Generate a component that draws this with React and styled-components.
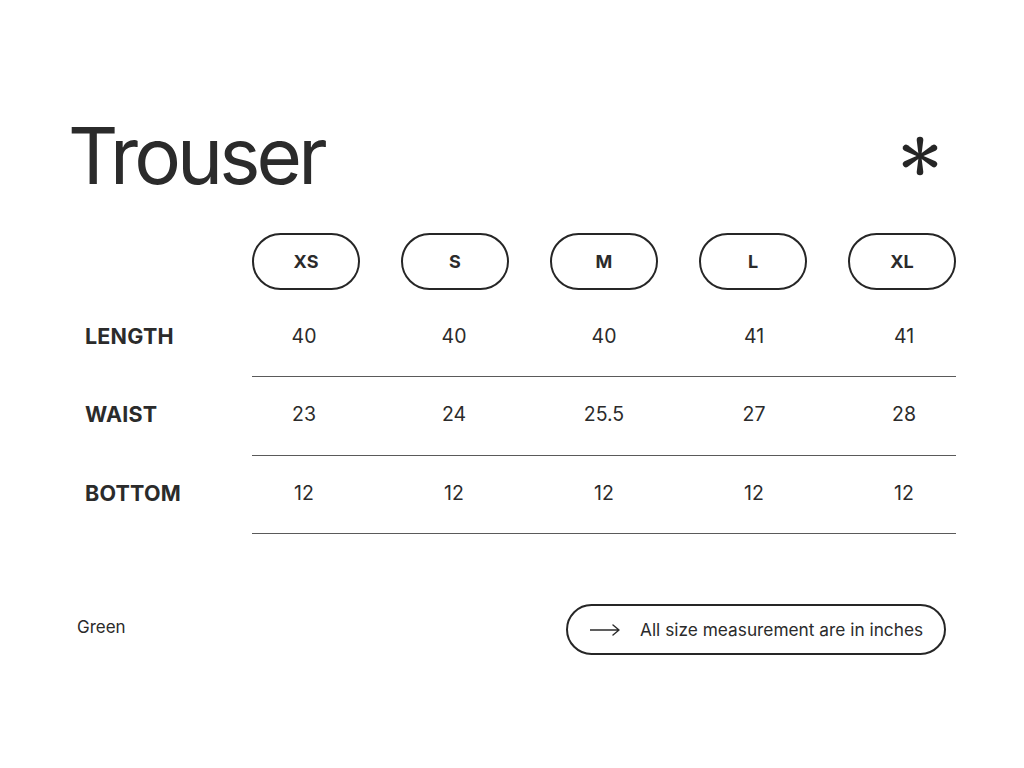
import React from "react";
import styled, { createGlobalStyle } from "styled-components";

const GlobalStyle = createGlobalStyle`
  html, body {
    margin: 0;
    padding: 0;
    background: #ffffff;
  }
  body {
    font-family: Inter, "Noto Sans", "Liberation Sans", sans-serif;
    color: #2b2b2b;
  }
`;

const Page = styled.div`
  width: 1024px;
  height: 768px;
  box-sizing: border-box;
  padding: 117px 68px 0 70px;
  background: #fff;
`;

const Header = styled.div`
  display: flex;
  justify-content: space-between;
  align-items: center;
  padding-right: 14px;
`;

const Title = styled.h1`
  margin: 0 0 0 -2px;
  font-size: 78px;
  line-height: 78px;
  font-weight: 400;
  letter-spacing: -3.9px;
  color: #2b2b2b;
`;

const Table = styled.div`
  margin-top: 38px;
  display: flex;
  flex-direction: column;
`;

const Row = styled.div`
  display: flex;
  align-items: stretch;
  margin-top: ${(p) => (p.first ? "8.5px" : "0")};
`;

const Label = styled.div`
  width: 182px;
  box-sizing: border-box;
  padding-left: 15px;
  padding-bottom: 4px;
  display: flex;
  align-items: center;
  font-size: 21.5px;
  font-weight: 700;
  letter-spacing: 0.2px;
  color: #2b2b2b;
`;

const Cells = styled.div`
  flex: 1;
  display: flex;
  justify-content: space-between;
  align-items: center;
  height: ${(p) => (p.head ? "57px" : "74.5px")};
  padding-bottom: ${(p) => (p.head ? "0" : "3px")};
  border-bottom: ${(p) => (p.head ? "none" : "1px solid #5a5a5a")};
`;

const Pill = styled.div`
  width: 108px;
  height: 57px;
  box-sizing: border-box;
  border: 2px solid #262626;
  border-radius: 29px;
  display: flex;
  align-items: center;
  justify-content: center;
  font-size: 18px;
  font-weight: 700;
  color: #2b2b2b;
`;

const Value = styled.div`
  width: 104px;
  text-align: center;
  font-size: 19.5px;
  color: #2b2b2b;
`;

const Footer = styled.div`
  margin-top: 70px;
  display: flex;
  justify-content: space-between;
  align-items: center;
  padding: 0 10px 0 7px;
`;

const Color = styled.div`
  font-size: 17px;
  color: #2b2b2b;
  margin-top: -5px;
`;

const Note = styled.div`
  width: 380px;
  height: 51px;
  box-sizing: border-box;
  border: 2px solid #262626;
  border-radius: 26px;
  display: flex;
  align-items: center;
  padding-left: 22px;
  gap: 20px;
  font-size: 17.3px;
  color: #2b2b2b;
`;

const Asterisk = () => (
  <svg width="44" height="44" viewBox="-22 -22 44 44">
    {[0, 60, 120, 180, 240, 300].map((a) => (
      <path
        key={a}
        transform={`rotate(${a})`}
        d="M -1.3 0 L -3.3 -16 A 3.3 3.3 0 0 1 3.3 -16 L 1.3 0 Z"
        fill="#262626"
      />
    ))}
    <circle r="2.6" fill="#262626" />
  </svg>
);

const Arrow = () => (
  <svg width="30" height="14" viewBox="0 0 30 14">
    <path
      d="M0 7 H29 M23 2 L29 7 L23 12"
      fill="none"
      stroke="#2b2b2b"
      strokeWidth="1.4"
      strokeLinecap="round"
      strokeLinejoin="round"
    />
  </svg>
);

const sizes = ["XS", "S", "M", "L", "XL"];

const rows = [
  { name: "LENGTH", values: ["40", "40", "40", "41", "41"] },
  { name: "WAIST", values: ["23", "24", "25.5", "27", "28"] },
  { name: "BOTTOM", values: ["12", "12", "12", "12", "12"] },
];

export default function App() {
  return (
    <Page>
      <GlobalStyle />
      <Header>
        <Title>Trouser</Title>
        <Asterisk />
      </Header>
      <Table>
        <Row>
          <Label />
          <Cells head>
            {sizes.map((s) => (
              <Pill key={s}>{s}</Pill>
            ))}
          </Cells>
        </Row>
        {rows.map((r, i) => (
          <Row key={r.name} first={i === 0}>
            <Label>{r.name}</Label>
            <Cells>
              {r.values.map((v, j) => (
                <Value key={j}>{v}</Value>
              ))}
            </Cells>
          </Row>
        ))}
      </Table>
      <Footer>
        <Color>Green</Color>
        <Note>
          <Arrow />
          <span>All size measurement are in inches</span>
        </Note>
      </Footer>
    </Page>
  );
}
